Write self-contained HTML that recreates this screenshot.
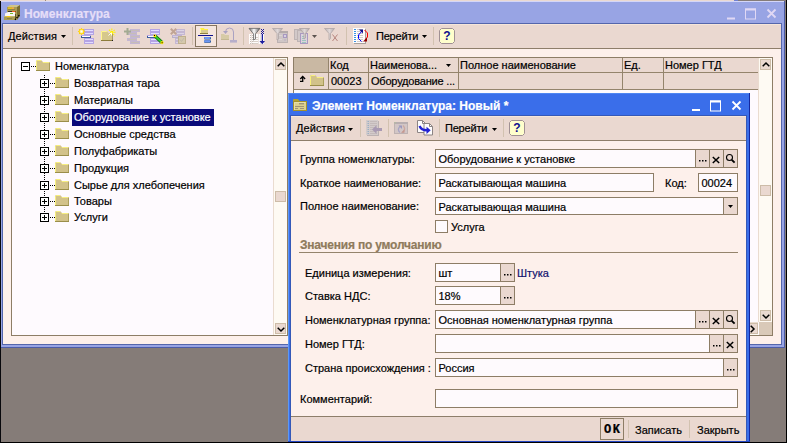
<!DOCTYPE html>
<html lang="ru">
<head>
<meta charset="utf-8">
<title>Номенклатура</title>
<style>
html,body{margin:0;padding:0;}
body{width:787px;height:443px;overflow:hidden;background:#857c78;position:relative;
 font-family:"Liberation Sans",sans-serif;font-size:11px;color:#000;line-height:13px;}
div,span{position:absolute;box-sizing:border-box;white-space:nowrap;}
svg{position:absolute;overflow:visible;}
.win{left:0;top:0;width:0;height:0;}
.t{font-size:11px;line-height:13px;height:13px;margin-top:1px;-webkit-text-stroke:0.2px currentColor;}
.fld{background:#fefafd;border:1px solid #8d7d66;height:19px;}
.fld .t{left:2.5px;top:1.5px;}
.btn{background:#ead8d0;border-left:1px solid #8d7d66;top:0;height:17px;width:14px;}
.sep{width:1px;background:#d2c2b0;}
.pm{width:9px;height:9px;border:1px solid #000;background:#fff;}
.pm i{position:absolute;left:1px;top:3px;width:5px;height:1px;background:#000;}
.pm b{position:absolute;left:3px;top:1px;width:1px;height:5px;background:#000;}
.dots{height:1px;background-image:linear-gradient(90deg,#000 50%,transparent 50%);background-size:2px 1px;}
.vdots{width:1px;background-image:linear-gradient(180deg,#000 50%,transparent 50%);background-size:1px 2px;}
.hc{height:15px;background:#ead8d0;border-right:1px solid #94846c;border-bottom:1px solid #94846c;}
.hc .t{left:1px;top:0;}
.rc{height:17px;background:#ead8d0;border-right:1px solid #94846c;border-bottom:1px solid #94846c;}
.rc .t{left:2px;top:1px;}
.sb{background:#ead8d0;border:1px solid #cdbca8;width:11px;height:11px;}
.lbl{font-size:11px;line-height:13px;height:13px;margin-top:1px;-webkit-text-stroke:0.2px currentColor;}
</style>
</head>
<body>
<!-- strip of the parent window above -->
<div style="left:0;top:0;width:734px;height:1px;background:#ead9d0;"></div>
<div style="left:734px;top:0;width:4px;height:1px;background:#7080d2;"></div>
<div style="left:45px;top:0;width:1px;height:1px;background:#9c8c7c;"></div>

<div class="win" id="list-window">
<div style="left:0;top:1px;width:785px;height:347px;background:#98a4e4;"></div>
<div style="left:0;top:1px;width:1px;height:442px;background:#08080c;"></div>
<div style="left:784px;top:1px;width:1px;height:347px;background:#4c5ca8;"></div>
<div style="left:1px;top:347px;width:784px;height:1px;background:#4c5ca8;"></div>
<div style="left:1px;top:1px;width:783px;height:1px;background:#d4d6f8;"></div>
<div class="t" style="left:24px;top:7px;font-weight:bold;font-size:12px;color:#e6def8;">Номенклатура</div>
<svg style="left:726px;top:7px;" width="52" height="14" viewBox="0 0 52 14"><g stroke="#e0d8f4" fill="none"><path d="M1 11.5h8" stroke-width="2"/><rect x="19.5" y="2" width="10" height="10" /><path d="M19 2.5h11" stroke-width="2"/><path d="M41.5 2.5l8 8M49.5 2.5l-8 8" stroke-width="1.8"/></g></svg>
<div style="left:2px;top:23px;width:780px;height:322px;background:#fdf0eb;border:1px solid #5466ac;"></div>
<div style="left:3px;top:24px;width:778px;height:25px;background:#ead8d0;border-bottom:1px solid #8e7e6a;border-top:1px solid #f6e6da;"></div>
<div class="t" style="left:8px;top:29px;letter-spacing:0.1px;">Действия</div>
<svg style="left:61px;top:35px;" width="5" height="3" viewBox="0 0 5 3"><path d="M0 0h5L2.5 3z" fill="#000"/></svg>
<div class="sep" style="left:72px;top:27px;height:18px;"></div>
<div class="sep" style="left:192px;top:27px;height:18px;"></div>
<div class="sep" style="left:243px;top:27px;height:18px;"></div>
<div class="sep" style="left:346px;top:27px;height:18px;"></div>
<div class="sep" style="left:433px;top:27px;height:18px;"></div>
<div class="t" style="left:376px;top:29px;letter-spacing:-0.2px;">Перейти</div>
<svg style="left:422px;top:35px;" width="5" height="3" viewBox="0 0 5 3"><path d="M0 0h5L2.5 3z" fill="#000"/></svg>
<svg width="0" height="0" style="left:0;top:0"><defs><linearGradient id="fg" x1="0" x2="1" y1="0" y2="0"><stop offset="0" stop-color="#6c6c6c"/><stop offset="0.45" stop-color="#fafafa"/><stop offset="1" stop-color="#5c5c5c"/></linearGradient><linearGradient id="fgg" x1="0" x2="1" y1="0" y2="0"><stop offset="0" stop-color="#b8b0b0"/><stop offset="0.5" stop-color="#e0d8d8"/><stop offset="1" stop-color="#b0a8a8"/></linearGradient></defs></svg>
<svg style="left:3px;top:4px;" width="19" height="18" viewBox="3 4 19 18" ><path d="M7 7l3-2h10l-3 2z" fill="#cfc488"/><path d="M17 7l3-2v11l-3 4z" fill="#7a6e30"/><rect x="7" y="7" width="10" height="13" fill="#a89c54"/><rect x="8" y="7.5" width="6" height="1.3" fill="#f8c810"/><rect x="12" y="7.5" width="2" height="1.3" fill="#f0a060"/><rect x="8" y="9" width="7" height="0.8" fill="#8a7e3c"/><rect x="8" y="11" width="8" height="1" fill="#3c3820"/><rect x="12" y="11" width="3.5" height="1.4" fill="#f06020"/><path d="M5 13.5l3-1.5h7v4H5z" fill="#fbf7f4"/><rect x="10" y="13" width="3" height="1" fill="#70c030"/><rect x="4" y="16" width="11" height="4" fill="#a89c54"/><rect x="4" y="16" width="11" height="0.8" fill="#c8bc78"/><rect x="6.5" y="16" width="4" height="1.2" fill="#f8c810"/><rect x="7" y="18" width="5" height="0.8" fill="#8a7e3c"/><rect x="15" y="14" width="1" height="6" fill="#5c5428"/><path d="M15 20l1-1.5 4-4" stroke="#000" stroke-width="1.2" stroke-dasharray="1.5 1" fill="none"/></svg>
<svg style="left:77px;top:27px;" width="18" height="18" viewBox="77 27 18 18" ><rect x="84" y="29" width="10" height="3" fill="#b4a4e4"/><rect x="85" y="30" width="8" height="1" fill="#e2dcff"/><rect x="84" y="32" width="10" height="3" fill="#b4a4e4"/><rect x="85" y="33" width="8" height="1" fill="#e2dcff"/><rect x="81" y="35" width="10" height="3" fill="#3c5c9c"/><rect x="81" y="35" width="10" height="1" fill="#b4a4e4"/><rect x="82" y="36" width="8" height="1" fill="#fff"/><rect x="84" y="38" width="10" height="3" fill="#b4a4e4"/><rect x="85" y="39" width="8" height="1" fill="#e2dcff"/><rect x="84" y="41" width="10" height="3" fill="#b4a4e4"/><rect x="85" y="42" width="8" height="1" fill="#e2dcff"/><polygon points="85.30,31.50 83.81,32.46 84.19,34.19 82.46,33.81 81.50,35.30 80.54,33.81 78.81,34.19 79.19,32.46 77.70,31.50 79.19,30.54 78.81,28.81 80.54,29.19 81.50,27.70 82.46,29.19 84.19,28.81 83.81,30.54" fill="#ffd200"/><circle cx="81.5" cy="31.5" r="1.900" fill="#ffe870"/><rect x="80.5" y="30.5" width="2" height="2" fill="#fff"/></svg>
<svg style="left:100px;top:27px;" width="18" height="18" viewBox="100 27 18 18" ><path d="M101 31h6l1.5 2h4.5v8h-12z" fill="#d6c88c"/><path d="M101.5 41v-9.5h5.3" stroke="#fff68c" fill="none"/><path d="M101 40.5h12" stroke="#8c7c3c"/><path d="M112.5 33v8" stroke="#a8986c"/><rect x="112" y="40" width="1" height="1" fill="#202020"/><g stroke="#fff200" stroke-width="1.100" stroke-dasharray="1.500 0.800"><path d="M111.800 32.300V27.800M111.800 32.300L115.300 29.300M111.800 32.300L108.500 29.300M111.800 32.300H116.300M111.800 32.300L115 36.200"/></g><circle cx="111.800" cy="32.300" r="1.600" fill="#fff200"/><path d="M108.5 35.5l3-3M111.5 33v2.5" stroke="#fff" stroke-width="0.9"/></svg>
<svg style="left:123px;top:27px;" width="18" height="18" viewBox="123 27 18 18" ><rect x="130" y="29" width="10" height="3" fill="#c4b7d2"/><rect x="131" y="30" width="8" height="1" fill="#c6bdb8"/><rect x="127" y="32" width="10" height="3" fill="#c4b7d2"/><rect x="128" y="33" width="8" height="1" fill="#c6bdb8"/><rect x="130" y="35" width="10" height="3" fill="#c4b7d2"/><rect x="131" y="36" width="8" height="1" fill="#c6bdb8"/><rect x="127" y="38" width="10" height="3" fill="#c4b7d2"/><rect x="128" y="39" width="8" height="1" fill="#c6bdb8"/><rect x="130" y="41" width="10" height="3" fill="#c4b7d2"/><rect x="131" y="42" width="8" height="1" fill="#c6bdb8"/><path d="M127.5 28v7M124 31.5h7" stroke="#a3ab92" stroke-width="2"/></svg>
<svg style="left:146px;top:27px;" width="18" height="18" viewBox="146 27 18 18" ><rect x="150" y="29" width="10" height="3" fill="#b4a4e4"/><rect x="151" y="30" width="8" height="1" fill="#e2dcff"/><rect x="150" y="32" width="10" height="3" fill="#b4a4e4"/><rect x="151" y="33" width="8" height="1" fill="#e2dcff"/><rect x="147" y="35" width="9" height="3" fill="#3c5c9c"/><rect x="147" y="35" width="9" height="1" fill="#b4a4e4"/><rect x="148" y="36" width="7" height="1" fill="#fff"/><rect x="150" y="38" width="10" height="3" fill="#b4a4e4"/><rect x="151" y="39" width="8" height="1" fill="#e2dcff"/><rect x="150" y="41" width="10" height="3" fill="#b4a4e4"/><rect x="151" y="42" width="8" height="1" fill="#e2dcff"/><path d="M155 36l7 6.5" stroke="#107010" stroke-width="3.4"/><path d="M155.2 36.2l6.6 6.1" stroke="#30d030" stroke-width="1.8"/><circle cx="154.8" cy="35.8" r="1.5" fill="#ffe800"/><circle cx="162" cy="42.6" r="1.6" fill="#ffe800"/><rect x="154" y="35" width="1" height="1" fill="#000"/><rect x="161.6" y="42.2" width="1" height="1" fill="#000"/></svg>
<svg style="left:169px;top:27px;" width="18" height="18" viewBox="169 27 18 18" ><rect x="176" y="29" width="9" height="3" fill="#c4b7d2"/><rect x="177" y="30" width="7" height="1" fill="#dcd4e4"/><rect x="176" y="32" width="9" height="3" fill="#c4b7d2"/><rect x="177" y="33" width="7" height="1" fill="#dcd4e4"/><rect x="172" y="35" width="10" height="3" fill="#b8b0c8"/><rect x="172" y="35" width="10" height="1" fill="#c0b2d2"/><rect x="173" y="36" width="8" height="1" fill="#d6cee0"/><rect x="175" y="38" width="4" height="3" fill="#c4b7d2"/><rect x="176" y="39" width="2" height="1" fill="#dcd4e4"/><rect x="175" y="41" width="4" height="3" fill="#c4b7d2"/><rect x="176" y="42" width="2" height="1" fill="#dcd4e4"/><rect x="178.5" y="36.5" width="7" height="7" fill="#d4c8ac" stroke="#bfb08e"/><path d="M180 39.5l1.5 2 2.5-3.5" stroke="#c0b8a8" fill="none"/><path d="M170.8 28.8l5.4 5.4M176.2 28.8l-5.4 5.4" stroke="#c0a494" stroke-width="2"/></svg>
<div style="left:195px;top:25px;width:22px;height:22px;background:#f5e6de;border:1px solid #857560;"></div>
<svg style="left:197px;top:27px;" width="18" height="18" viewBox="197 27 18 18" ><path d="M200 28h3.5l1 1h3.5v5h-8z" fill="#d8cc90"/><path d="M200 28h3.5l1 1h3.5v1h-8z" fill="#fff040"/><path d="M200.5 33.5v-5" stroke="#fff8a0"/><path d="M200 33.5h8" stroke="#8c8040"/><rect x="198" y="35" width="15" height="1" fill="#10108c"/><rect x="204" y="37" width="7" height="2.6" rx="1" fill="#1c4c90"/><rect x="204" y="37" width="6.4" height="2" rx="1" fill="#6c98f4"/><rect x="204" y="40.2" width="7" height="2.6" rx="1" fill="#1c4c90"/><rect x="204" y="40.2" width="6.4" height="2" rx="1" fill="#6c98f4"/></svg>
<svg style="left:220px;top:27px;" width="18" height="18" viewBox="220 27 18 18" ><path d="M221 34h3l1 1h4v5h-8z" fill="#d6caa6"/><path d="M221 39.5h8" stroke="#c4b894"/><path d="M233.5 41v-9q0-4-4-4q-4 0-4 4v1" stroke="#aaa2c2" fill="none"/><path d="M223 31h5l-2.5 3z" fill="#aaa2c2"/><rect x="230" y="40" width="7" height="2.6" fill="#b6aeca"/></svg>
<svg style="left:248px;top:27px;" width="18" height="18" viewBox="248 27 18 18" ><rect x="249" y="34" width="15" height="10" fill="#fefcfc"/><rect x="250" y="35" width="1" height="1" fill="#c4bcb4"/><rect x="252" y="35" width="1" height="1" fill="#c4bcb4"/><rect x="250" y="37" width="1" height="1" fill="#c4bcb4"/><rect x="252" y="37" width="1" height="1" fill="#c4bcb4"/><rect x="250" y="39" width="1" height="1" fill="#c4bcb4"/><rect x="252" y="39" width="1" height="1" fill="#c4bcb4"/><rect x="250" y="41" width="1" height="1" fill="#c4bcb4"/><rect x="252" y="41" width="1" height="1" fill="#c4bcb4"/><rect x="250" y="43" width="1" height="1" fill="#c4bcb4"/><rect x="252" y="43" width="1" height="1" fill="#c4bcb4"/><rect x="253" y="37" width="5" height="1" fill="#d8d0c8"/><rect x="253" y="39" width="5" height="1" fill="#d8d0c8"/><rect x="253" y="41" width="5" height="1" fill="#d8d0c8"/><rect x="253" y="43" width="5" height="1" fill="#d8d0c8"/><path d="M251.5 34v10M258.5 34v10M260.5 34v10" stroke="#ece4e0" stroke-width="1"/><path d="M249 28.400h11l-4.500 5.500v5l-2 1.200v-6.200z" fill="url(#fg)" stroke="#585858" stroke-width="0.7"/><g fill="#1c1c9c"><rect x="261" y="29" width="1" height="1"/><rect x="263" y="29" width="1" height="1"/><rect x="262" y="30" width="1" height="1"/><rect x="261" y="31" width="1" height="1"/><rect x="263" y="31" width="1" height="1"/><rect x="262" y="32" width="1" height="1"/><rect x="261" y="33" width="1" height="1"/><rect x="263" y="33" width="1" height="1"/><rect x="261.7" y="34" width="1.3" height="8"/><path d="M259.5 41h5.5l-2.7 3.2z"/></g></svg>
<svg style="left:271px;top:27px;" width="18" height="18" viewBox="271 27 18 18" ><rect x="277.5" y="31.5" width="10" height="11" fill="#cfc6c6" stroke="#bcb2b2"/><rect x="277" y="31" width="11" height="2" fill="#b4aaaa"/><rect x="283.5" y="34.5" width="3" height="3" fill="#d8d0e0" stroke="#a898c0"/><rect x="284.5" y="39.5" width="1" height="1" fill="#a898c0"/><rect x="279" y="35" width="3" height="1" fill="#dcd4d4"/><rect x="279" y="39" width="3" height="1" fill="#dcd4d4"/><path d="M272.5 28.5h10l-4 5v5.5l-1.5 1v-6.5z" fill="url(#fgg)" stroke="#b0a6a6" stroke-width="0.8"/></svg>
<svg style="left:293px;top:27px;" width="26" height="18" viewBox="293 27 26 18" ><rect x="294.5" y="29.5" width="6" height="10" fill="#d2c9c9" stroke="#beb4b4"/><rect x="297.5" y="30.5" width="6" height="11" fill="#d2c9c9" stroke="#beb4b4"/><rect x="300.5" y="33.5" width="7" height="10" fill="#dcd4dc" stroke="#a999c1"/><path d="M302 36.500h2M302 38.500h2M302 40.500h4M302 42.500h4" stroke="#9cc6be" stroke-width="1"/><path d="M299.5 28.5h10l-4 5v4.5l-1.5 1v-5.500z" fill="url(#fgg)" stroke="#aca2a2" stroke-width="0.8"/><path d="M312 35h5l-2.500 3z" fill="#5c5450"/></svg>
<svg style="left:323px;top:27px;" width="18" height="18" viewBox="323 27 18 18" ><path d="M324.500 28.500h10l-4 5v5l-1.500 1.200v-6.200z" fill="url(#fgg)" stroke="#b0a6a6" stroke-width="0.8"/><path d="M332.500 34.500l5 6.500M337.500 34.500l-5 6.500" stroke="#b07c74" stroke-width="0.900"/></svg>
<svg style="left:352px;top:27px;" width="18" height="18" viewBox="352 27 18 18" ><rect x="354" y="29" width="12" height="15" fill="#a8a09c"/><rect x="353" y="28" width="12" height="15" fill="#fefcfc"/><rect x="354" y="29" width="2" height="1" fill="#3c94e4"/><rect x="354" y="31" width="2" height="1" fill="#3c94e4"/><rect x="354" y="33" width="2" height="1" fill="#3c94e4"/><rect x="354" y="35" width="2" height="1" fill="#3c94e4"/><rect x="354" y="37" width="2" height="1" fill="#3c94e4"/><rect x="354" y="39" width="2" height="1" fill="#3c94e4"/><rect x="354" y="41" width="2" height="1" fill="#3c94e4"/><rect x="357" y="29" width="6" height="1" fill="#d4ccc8"/><rect x="357" y="31" width="6" height="1" fill="#d4ccc8"/><rect x="357" y="33" width="6" height="1" fill="#d4ccc8"/><rect x="357" y="35" width="6" height="1" fill="#d4ccc8"/><rect x="357" y="37" width="6" height="1" fill="#d4ccc8"/><rect x="357" y="39" width="6" height="1" fill="#d4ccc8"/><rect x="357" y="41" width="6" height="1" fill="#d4ccc8"/><path d="M361.500 41.500l-3-3v-3.500l4-4.500" stroke="#0000ff" stroke-width="1" fill="none"/><path d="M359 29.500h4v4z" fill="#10108c"/><path d="M364.500 30l3 3v4l-2.500 3" stroke="#ff0000" stroke-width="1" fill="none"/><path d="M363 41.500h4v-4z" fill="#900000"/></svg>
<svg style="left:439px;top:28px;" width="16" height="16" viewBox="439 28 16 16" ><path d="M441.5 28.5h11l2 2v11l-2 2h-11l-2-2v-11z" fill="#ffffcc" stroke="#a09094"/><text x="447" y="40.2" text-anchor="middle" font-family="Liberation Sans,sans-serif" font-weight="bold" font-size="12" fill="#10108c">?</text></svg>
<div id="tree" style="left:11px;top:57px;width:277px;height:279px;background:#fefafe;border:1px solid #8d7d66;">
<div style="left:261px;top:0;width:14px;height:277px;background:#fefaf3;border-left:1px solid #eadcd0;"></div>
<div class="sb" style="left:263px;top:1px;"></div>
<svg style="left:265px;top:4px;" width="8" height="5"><path d="M0.7 4.3L4 1l3.300 3.300" stroke="#000" stroke-width="1.500" fill="none"/></svg>
<div class="sb" style="left:263px;top:265px;"></div>
<svg style="left:265px;top:269px;" width="8" height="5"><path d="M0.7 0.7L4 4l3.300-3.300" stroke="#000" stroke-width="1.500" fill="none"/></svg>
<div class="sb" style="left:263px;top:133px;"></div>
<div class="vdots" style="left:32px;top:17px;height:138px;"></div>
<div class="pm" style="left:9px;top:4px;"><i></i></div>
<div class="dots" style="left:19px;top:8px;width:5px;"></div>
<svg style="left:24px;top:2px;" width="14" height="11" viewBox="0 0 14 11"><path d="M0 1L1 0H5L7 2H14V11H0Z" fill="#d2c28a"/><path d="M0.500 10V1.200L1.200 0.500H5" stroke="#f8f07c" fill="none"/><path d="M6.800 2.500H13" stroke="#f6ee80" fill="none"/><path d="M0 10.500H14" stroke="#9a8e4a" fill="none"/><path d="M13.500 3V10" stroke="#ac9f5c" fill="none"/></svg>
<div class="t" style="left:43px;top:1px;">Номенклатура</div>
<div class="pm" style="left:28px;top:21px;"><i></i><b></b></div>
<div class="dots" style="left:38px;top:25px;width:5px;"></div>
<svg style="left:43px;top:19px;" width="14" height="11" viewBox="0 0 14 11"><path d="M0 1L1 0H5L7 2H14V11H0Z" fill="#d2c28a"/><path d="M0.500 10V1.200L1.200 0.500H5" stroke="#f8f07c" fill="none"/><path d="M6.800 2.500H13" stroke="#f6ee80" fill="none"/><path d="M0 10.500H14" stroke="#9a8e4a" fill="none"/><path d="M13.500 3V10" stroke="#ac9f5c" fill="none"/></svg>
<div class="t" style="left:62px;top:18px;">Возвратная тара</div>
<div class="pm" style="left:28px;top:38px;"><i></i><b></b></div>
<div class="dots" style="left:38px;top:42px;width:5px;"></div>
<svg style="left:43px;top:36px;" width="14" height="11" viewBox="0 0 14 11"><path d="M0 1L1 0H5L7 2H14V11H0Z" fill="#d2c28a"/><path d="M0.500 10V1.200L1.200 0.500H5" stroke="#f8f07c" fill="none"/><path d="M6.800 2.500H13" stroke="#f6ee80" fill="none"/><path d="M0 10.500H14" stroke="#9a8e4a" fill="none"/><path d="M13.500 3V10" stroke="#ac9f5c" fill="none"/></svg>
<div class="t" style="left:62px;top:35px;">Материалы</div>
<div class="pm" style="left:28px;top:55px;"><i></i><b></b></div>
<div class="dots" style="left:38px;top:59px;width:5px;"></div>
<svg style="left:43px;top:53px;" width="14" height="11" viewBox="0 0 14 11"><path d="M0 1L1 0H5L7 2H14V11H0Z" fill="#d2c28a"/><path d="M0.500 10V1.200L1.200 0.500H5" stroke="#f8f07c" fill="none"/><path d="M6.800 2.500H13" stroke="#f6ee80" fill="none"/><path d="M0 10.500H14" stroke="#9a8e4a" fill="none"/><path d="M13.500 3V10" stroke="#ac9f5c" fill="none"/></svg>
<div style="left:60px;top:51px;width:142px;height:17px;background:#0a0a7a;"></div>
<div class="t" style="left:62px;top:52px;color:#fff;">Оборудование к установке</div>
<div class="pm" style="left:28px;top:72px;"><i></i><b></b></div>
<div class="dots" style="left:38px;top:76px;width:5px;"></div>
<svg style="left:43px;top:70px;" width="14" height="11" viewBox="0 0 14 11"><path d="M0 1L1 0H5L7 2H14V11H0Z" fill="#d2c28a"/><path d="M0.500 10V1.200L1.200 0.500H5" stroke="#f8f07c" fill="none"/><path d="M6.800 2.500H13" stroke="#f6ee80" fill="none"/><path d="M0 10.500H14" stroke="#9a8e4a" fill="none"/><path d="M13.500 3V10" stroke="#ac9f5c" fill="none"/></svg>
<div class="t" style="left:62px;top:69px;">Основные средства</div>
<div class="pm" style="left:28px;top:89px;"><i></i><b></b></div>
<div class="dots" style="left:38px;top:93px;width:5px;"></div>
<svg style="left:43px;top:87px;" width="14" height="11" viewBox="0 0 14 11"><path d="M0 1L1 0H5L7 2H14V11H0Z" fill="#d2c28a"/><path d="M0.500 10V1.200L1.200 0.500H5" stroke="#f8f07c" fill="none"/><path d="M6.800 2.500H13" stroke="#f6ee80" fill="none"/><path d="M0 10.500H14" stroke="#9a8e4a" fill="none"/><path d="M13.500 3V10" stroke="#ac9f5c" fill="none"/></svg>
<div class="t" style="left:62px;top:86px;">Полуфабрикаты</div>
<div class="pm" style="left:28px;top:106px;"><i></i><b></b></div>
<div class="dots" style="left:38px;top:110px;width:5px;"></div>
<svg style="left:43px;top:104px;" width="14" height="11" viewBox="0 0 14 11"><path d="M0 1L1 0H5L7 2H14V11H0Z" fill="#d2c28a"/><path d="M0.500 10V1.200L1.200 0.500H5" stroke="#f8f07c" fill="none"/><path d="M6.800 2.500H13" stroke="#f6ee80" fill="none"/><path d="M0 10.500H14" stroke="#9a8e4a" fill="none"/><path d="M13.500 3V10" stroke="#ac9f5c" fill="none"/></svg>
<div class="t" style="left:62px;top:103px;">Продукция</div>
<div class="pm" style="left:28px;top:123px;"><i></i><b></b></div>
<div class="dots" style="left:38px;top:127px;width:5px;"></div>
<svg style="left:43px;top:121px;" width="14" height="11" viewBox="0 0 14 11"><path d="M0 1L1 0H5L7 2H14V11H0Z" fill="#d2c28a"/><path d="M0.500 10V1.200L1.200 0.500H5" stroke="#f8f07c" fill="none"/><path d="M6.800 2.500H13" stroke="#f6ee80" fill="none"/><path d="M0 10.500H14" stroke="#9a8e4a" fill="none"/><path d="M13.500 3V10" stroke="#ac9f5c" fill="none"/></svg>
<div class="t" style="left:62px;top:120px;">Сырье для хлебопечения</div>
<div class="pm" style="left:28px;top:139px;"><i></i><b></b></div>
<div class="dots" style="left:38px;top:143px;width:5px;"></div>
<svg style="left:43px;top:137px;" width="14" height="11" viewBox="0 0 14 11"><path d="M0 1L1 0H5L7 2H14V11H0Z" fill="#d2c28a"/><path d="M0.500 10V1.200L1.200 0.500H5" stroke="#f8f07c" fill="none"/><path d="M6.800 2.500H13" stroke="#f6ee80" fill="none"/><path d="M0 10.500H14" stroke="#9a8e4a" fill="none"/><path d="M13.500 3V10" stroke="#ac9f5c" fill="none"/></svg>
<div class="t" style="left:62px;top:136px;">Товары</div>
<div class="pm" style="left:28px;top:155px;"><i></i><b></b></div>
<div class="dots" style="left:38px;top:159px;width:5px;"></div>
<svg style="left:43px;top:153px;" width="14" height="11" viewBox="0 0 14 11"><path d="M0 1L1 0H5L7 2H14V11H0Z" fill="#d2c28a"/><path d="M0.500 10V1.200L1.200 0.500H5" stroke="#f8f07c" fill="none"/><path d="M6.800 2.500H13" stroke="#f6ee80" fill="none"/><path d="M0 10.500H14" stroke="#9a8e4a" fill="none"/><path d="M13.500 3V10" stroke="#ac9f5c" fill="none"/></svg>
<div class="t" style="left:62px;top:152px;">Услуги</div>
</div>
<div id="grid" style="left:293px;top:57px;width:480px;height:279px;background:#fefafe;border:1px solid #8d7d66;">
<div class="hc" style="left:0px;top:0;width:35px;background:#c9b8a3;"><span class="t"></span></div>
<div class="rc" style="left:0px;top:15px;width:35px;"><span class="t" style=""></span></div>
<div class="hc" style="left:35px;top:0;width:40px;"><span class="t">Код</span></div>
<div class="rc" style="left:35px;top:15px;width:40px;"><span class="t" style="">00023</span></div>
<div class="hc" style="left:75px;top:0;width:90px;"><span class="t">Наименова...</span></div>
<div class="rc" style="left:75px;top:15px;width:90px;"><span class="t" style="letter-spacing:-0.2px;">Оборудование ...</span></div>
<div class="hc" style="left:165px;top:0;width:164px;"><span class="t">Полное наименование</span></div>
<div class="rc" style="left:165px;top:15px;width:164px;"><span class="t" style=""></span></div>
<div class="hc" style="left:329px;top:0;width:41px;"><span class="t">Ед.</span></div>
<div class="rc" style="left:329px;top:15px;width:41px;"><span class="t" style=""></span></div>
<div class="hc" style="left:370px;top:0;width:94px;border-right:0;"><span class="t">Номер ГТД</span></div>
<div class="rc" style="left:370px;top:15px;width:94px;border-right:0;"><span class="t" style=""></span></div>
<svg style="left:152px;top:6px;" width="5" height="3" viewBox="0 0 5 3"><path d="M0 0h5L2.500 3z" fill="#000"/></svg>
<svg style="left:5px;top:17px;" width="8" height="8" viewBox="299 75 8 8"><path d="M300.300 79L302.700 76.500L305.100 79" stroke="#000" stroke-width="1.400" fill="none"/><path d="M302.700 77V81.300H300" stroke="#000" stroke-width="1.300" fill="none"/></svg>
<svg style="left:16px;top:17px;" width="14" height="11" viewBox="0 0 14 11"><path d="M0 1L1 0H5L7 2H14V11H0Z" fill="#d2c28a"/><path d="M0.500 10V1.200L1.200 0.500H5" stroke="#f8f07c" fill="none"/><path d="M6.800 2.500H13" stroke="#f6ee80" fill="none"/><path d="M0 10.500H14" stroke="#9a8e4a" fill="none"/><path d="M13.500 3V10" stroke="#ac9f5c" fill="none"/></svg>
<div style="left:464px;top:0;width:14px;height:264px;background:#fefaf3;border-left:1px solid #eadcd0;"></div>
<div class="sb" style="left:466px;top:1px;"></div>
<svg style="left:468px;top:4px;" width="8" height="5"><path d="M0.7 4.3L4 1l3.300 3.300" stroke="#000" stroke-width="1.500" fill="none"/></svg>
<div class="sb" style="left:466px;top:127px;"></div>
<div class="sb" style="left:466px;top:252px;"></div>
<svg style="left:468px;top:256px;" width="8" height="5"><path d="M0.7 0.7L4 4l3.300-3.300" stroke="#000" stroke-width="1.500" fill="none"/></svg>
<div style="left:0;top:264px;width:464px;height:13px;background:#fefaf3;border-top:1px solid #eadcd0;"></div>
<div class="sb" style="left:453px;top:265px;"></div>
<svg style="left:456px;top:267px;" width="5" height="8"><path d="M0.7 0.7L4 4l-3.300 3.300" stroke="#000" stroke-width="1.500" fill="none"/></svg>
<div style="left:465px;top:264px;width:13px;height:13px;background:#d9c9b8;"></div>
</div>
</div>
<div class="win" id="element-window">
<div style="left:288px;top:93px;width:462px;height:349px;background:#3a6eea;"></div>
<div style="left:749px;top:93px;width:1px;height:349px;background:#1428a0;"></div>
<div style="left:288px;top:93px;width:1px;height:349px;background:#5c98f4;"></div>
<div style="left:288px;top:93px;width:461px;height:1px;background:#4f86f2;"></div>
<div class="t" style="left:312px;top:99px;font-weight:bold;font-size:12px;color:#fff;">Элемент Номенклатура: Новый *</div>
<svg style="left:691px;top:99px;" width="52" height="14" viewBox="0 0 52 14"><g stroke="#fff" fill="none"><path d="M1 11h8" stroke-width="2"/><rect x="19.5" y="2" width="10" height="10" /><path d="M19 2.5h11" stroke-width="2"/><path d="M41.5 2.5l8 8M49.5 2.5l-8 8" stroke-width="1.8"/></g></svg>
<div style="left:290px;top:115px;width:457px;height:326px;background:#fdf0eb;border:1px solid #3458b8;border-bottom:0;"></div>
<div style="left:291px;top:116px;width:455px;height:25px;background:#ead8d0;border-bottom:1px solid #8e7e6a;border-top:1px solid #f6e6da;"></div>
<div class="t" style="left:296px;top:121px;letter-spacing:0.1px;">Действия</div>
<svg style="left:348px;top:128px;" width="5" height="3" viewBox="0 0 5 3"><path d="M0 0h5L2.5 3z" fill="#000"/></svg>
<div class="sep" style="left:360px;top:119px;height:18px;"></div>
<div class="sep" style="left:388px;top:119px;height:18px;"></div>
<div class="sep" style="left:439px;top:119px;height:18px;"></div>
<div class="sep" style="left:503px;top:119px;height:18px;"></div>
<div class="t" style="left:445px;top:121px;letter-spacing:-0.2px;">Перейти</div>
<svg style="left:492px;top:128px;" width="5" height="3" viewBox="0 0 5 3"><path d="M0 0h5L2.5 3z" fill="#000"/></svg>
<svg style="left:292px;top:98px;" width="16" height="14" viewBox="292 98 16 14" ><path d="M293 101.500v-2l0.700-0.500h4.300l2 2.500z" fill="#b2a234"/><rect x="293.500" y="101.500" width="13" height="9" fill="#dcd08e" stroke="#a4922c"/><path d="M294.500 110v-7.500h11" stroke="#e8e0a8" fill="none"/><rect x="299" y="103" width="5" height="1.400" fill="#a09474"/><rect x="295" y="106" width="9" height="1" fill="#a09474"/><rect x="295" y="108" width="3" height="1" fill="#a09474"/><rect x="300" y="108" width="4" height="1" fill="#a09474"/></svg>
<svg style="left:365px;top:119px;" width="18" height="18" viewBox="365 119 18 18" ><rect x="367" y="121" width="12" height="15" fill="#bcb2b2"/><rect x="366" y="120" width="12" height="15" fill="#d3cbcb"/><rect x="367.500" y="121" width="1.500" height="1" fill="#9cb0c4"/><rect x="367.500" y="123" width="1.500" height="1" fill="#9cb0c4"/><rect x="367.500" y="125" width="1.500" height="1" fill="#9cb0c4"/><rect x="367.500" y="127" width="1.500" height="1" fill="#9cb0c4"/><rect x="367.500" y="129" width="1.500" height="1" fill="#9cb0c4"/><rect x="367.500" y="131" width="1.500" height="1" fill="#9cb0c4"/><rect x="367.500" y="133" width="1.500" height="1" fill="#9cb0c4"/><rect x="370" y="121" width="7" height="1" fill="#c4baba"/><rect x="370" y="123" width="7" height="1" fill="#c4baba"/><rect x="370" y="125" width="7" height="1" fill="#c4baba"/><rect x="370" y="127" width="7" height="1" fill="#c4baba"/><rect x="370" y="129" width="7" height="1" fill="#c4baba"/><rect x="370" y="131" width="7" height="1" fill="#c4baba"/><rect x="370" y="133" width="7" height="1" fill="#c4baba"/><path d="M372 129.500l4.500-4.300v2.800h5.500v3h-5.500v2.800z" fill="#a99ab3"/></svg>
<svg style="left:393px;top:119px;" width="16" height="18" viewBox="393 119 16 18" ><rect x="394.500" y="122.500" width="13" height="11" fill="#d2c6c6" stroke="#beb2b2"/><rect x="394" y="122" width="14" height="2" fill="#b8aeb0"/><rect x="394.500" y="122.300" width="1.200" height="1.200" fill="#b4c49c"/><path d="M400 132.500q-3.500-3 0.500-6.500" stroke="#a8a4c4" stroke-width="1.300" fill="none"/><path d="M398.500 125.500h3.500v3.500z" fill="#9c98bc"/><path d="M403 125.500q3.500 3.500-0.500 7" stroke="#cca8a0" stroke-width="1.300" fill="none"/><path d="M401 132.800h3.500v-3.500z" fill="#c49890"/></svg>
<svg style="left:416px;top:119px;" width="18" height="18" viewBox="416 119 18 18" ><path d="M417.500 120.500h5l3 3v9h-8z" fill="#fefcfc" stroke="#8c8484"/><path d="M422.500 120.500v3h3" fill="none" stroke="#8c8484"/><path d="M424 123.500h5.500l3 3v8.500h-8.500z" fill="#fefcfc" stroke="#8c8484"/><path d="M429.500 123.500v3h3" fill="none" stroke="#8c8484"/><path d="M419.500 126q2 4.500 8 4.200" stroke="#2222d4" stroke-width="2.400" fill="none"/><path d="M426.500 126.800l4.200 3.500-4.200 3.700z" fill="#2222d4"/></svg>
<svg style="left:509px;top:120px;" width="16" height="16" viewBox="509 120 16 16" ><path d="M511.5 120.5h11l2 2v11l-2 2h-11l-2-2v-11z" fill="#ffffcc" stroke="#a09094"/><text x="517" y="132.2" text-anchor="middle" font-family="Liberation Sans,sans-serif" font-weight="bold" font-size="12" fill="#10108c">?</text></svg>
<div class="lbl" style="left:300px;top:152px;">Группа номенклатуры:</div>
<div class="fld" style="left:435px;top:149px;width:303px;height:19px;"><span class="t">Оборудование к установке</span><div class="btn" style="left:259px;height:17px;"><svg style="left:3px;top:9.5px;" width="8" height="2"><path d="M0 0h1.5v1.5H0zM3 0h1.5v1.5H3zM6 0h1.5v1.5H6z" fill="#000"/></svg></div><div class="btn" style="left:273px;height:17px;"><svg style="left:1.5px;top:5.5px;" width="8" height="8" viewBox="0 0 8 8"><path d="M0.8 1l6.400 6M7.200 1l-6.400 6" stroke="#000" stroke-width="1.500" fill="none"/></svg></div><div class="btn" style="left:287px;height:17px;"><svg style="left:1px;top:3px;" width="12" height="12" viewBox="0 0 12 12"><circle cx="4.500" cy="4.500" r="3" stroke="#000" stroke-width="1.100" fill="none"/><path d="M6.800 6.800l2.800 2.800" stroke="#000" stroke-width="1.900"/></svg></div></div>
<div class="lbl" style="left:300px;top:176px;">Краткое наименование:</div>
<div class="fld" style="left:435px;top:173px;width:219px;height:19px;"><span class="t">Раскатывающая машина</span></div>
<div class="lbl" style="left:665px;top:176px;">Код:</div>
<div class="fld" style="left:698px;top:173px;width:40px;height:19px;"><span class="t">00024</span></div>
<div class="lbl" style="left:300px;top:199px;">Полное наименование:</div>
<div class="fld" style="left:435px;top:197px;width:303px;height:18px;"><span class="t">Раскатывающая машина</span><div class="btn" style="left:287px;height:16px;"><svg style="left:4px;top:7px;" width="5" height="3" viewBox="0 0 5 3"><path d="M0 0h5L2.500 3z" fill="#000"/></svg></div></div>
<div style="left:435px;top:220px;width:13px;height:13px;background:#fefafd;border:1px solid #8d7d66;"></div>
<div class="lbl" style="left:451px;top:220px;">Услуга</div>
<div class="lbl" style="left:300px;top:238px;font-weight:bold;font-size:12px;color:#8f7b5c;letter-spacing:-0.2px;">Значения по умолчанию</div>
<div style="left:299px;top:252px;width:439px;height:1px;background:#94846c;"></div>
<div class="lbl" style="left:305px;top:266px;">Единица измерения:</div>
<div class="fld" style="left:435px;top:263px;width:80px;height:19px;"><span class="t">шт</span><div class="btn" style="left:64px;height:17px;"><svg style="left:3px;top:9.5px;" width="8" height="2"><path d="M0 0h1.5v1.5H0zM3 0h1.5v1.5H3zM6 0h1.5v1.5H6z" fill="#000"/></svg></div></div>
<div class="lbl" style="left:517px;top:266px;color:#10106c;">Штука</div>
<div class="lbl" style="left:305px;top:289px;">Ставка НДС:</div>
<div class="fld" style="left:435px;top:286px;width:80px;height:19px;"><span class="t">18%</span><div class="btn" style="left:64px;height:17px;"><svg style="left:3px;top:9.5px;" width="8" height="2"><path d="M0 0h1.5v1.5H0zM3 0h1.5v1.5H3zM6 0h1.5v1.5H6z" fill="#000"/></svg></div></div>
<div class="lbl" style="left:305px;top:313px;">Номенклатурная группа:</div>
<div class="fld" style="left:435px;top:310px;width:303px;height:19px;"><span class="t">Основная номенклатурная группа</span><div class="btn" style="left:259px;height:17px;"><svg style="left:3px;top:9.5px;" width="8" height="2"><path d="M0 0h1.5v1.5H0zM3 0h1.5v1.5H3zM6 0h1.5v1.5H6z" fill="#000"/></svg></div><div class="btn" style="left:273px;height:17px;"><svg style="left:1.5px;top:5.5px;" width="8" height="8" viewBox="0 0 8 8"><path d="M0.8 1l6.400 6M7.200 1l-6.400 6" stroke="#000" stroke-width="1.500" fill="none"/></svg></div><div class="btn" style="left:287px;height:17px;"><svg style="left:1px;top:3px;" width="12" height="12" viewBox="0 0 12 12"><circle cx="4.500" cy="4.500" r="3" stroke="#000" stroke-width="1.100" fill="none"/><path d="M6.800 6.800l2.800 2.800" stroke="#000" stroke-width="1.900"/></svg></div></div>
<div class="lbl" style="left:305px;top:337px;">Номер ГТД:</div>
<div class="fld" style="left:435px;top:334px;width:303px;height:19px;"><span class="t"></span><div class="btn" style="left:273px;height:17px;"><svg style="left:3px;top:9.5px;" width="8" height="2"><path d="M0 0h1.5v1.5H0zM3 0h1.5v1.5H3zM6 0h1.5v1.5H6z" fill="#000"/></svg></div><div class="btn" style="left:287px;height:17px;"><svg style="left:1.5px;top:5.5px;" width="8" height="8" viewBox="0 0 8 8"><path d="M0.8 1l6.400 6M7.200 1l-6.400 6" stroke="#000" stroke-width="1.500" fill="none"/></svg></div></div>
<div class="lbl" style="left:305px;top:361px;">Страна происхождения :</div>
<div class="fld" style="left:435px;top:358px;width:303px;height:19px;"><span class="t">Россия</span><div class="btn" style="left:287px;height:17px;"><svg style="left:3px;top:9.5px;" width="8" height="2"><path d="M0 0h1.5v1.5H0zM3 0h1.5v1.5H3zM6 0h1.5v1.5H6z" fill="#000"/></svg></div></div>
<div class="lbl" style="left:300px;top:392px;">Комментарий:</div>
<div class="fld" style="left:435px;top:389px;width:303px;height:19px;"><span class="t"></span></div>
<div style="left:291px;top:416px;width:455px;height:25px;background:#ead8d0;border-top:1px solid #8e7e6a;"></div>
<div style="left:600px;top:418px;width:24px;height:22px;background:#ead8d0;border:1px solid #8d7d66;"></div>
<div class="t" style="left:604px;top:423px;font-weight:bold;font-family:'Liberation Mono',monospace;font-size:12px;letter-spacing:1.5px;">OK</div>
<div class="sep" style="left:628px;top:420px;height:18px;"></div>
<div class="t" style="left:635px;top:423px;">Записать</div>
<div class="sep" style="left:689px;top:420px;height:18px;"></div>
<div class="t" style="left:697px;top:423px;">Закрыть</div>
<div style="left:288px;top:441px;width:462px;height:1px;background:#2446c4;"></div>
</div>
<div style="left:786px;top:0;width:1px;height:443px;background:#000;"></div>
<div style="left:0;top:442px;width:787px;height:1px;background:#000;"></div>
</body>
</html>
